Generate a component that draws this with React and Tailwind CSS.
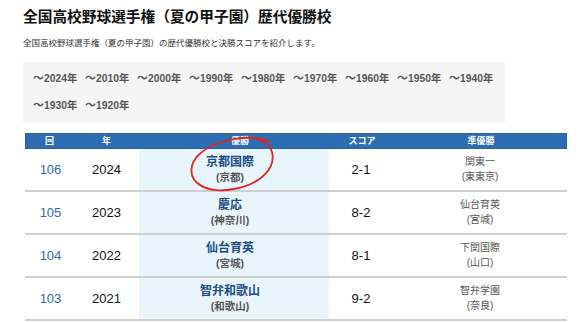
import React from "react";

const years = ["2024", "2010", "2000", "1990", "1980", "1970", "1960", "1950", "1940", "1930", "1920"];

const rows = [
  { n: "106", y: "2024", w: "京都国際", wp: "(京都)", s: "2-1", r: "関東一", rp: "(東東京)" },
  { n: "105", y: "2023", w: "慶応", wp: "(神奈川)", s: "8-2", r: "仙台育英", rp: "(宮城)" },
  { n: "104", y: "2022", w: "仙台育英", wp: "(宮城)", s: "8-1", r: "下関国際", rp: "(山口)" },
  { n: "103", y: "2021", w: "智弁和歌山", wp: "(和歌山)", s: "9-2", r: "智弁学園", rp: "(奈良)" },
];

const font = { fontFamily: '"Liberation Sans", "Noto Sans CJK JP", sans-serif' };

export default function App() {
  return (
    <div className="w-[586px] h-[323px] overflow-hidden bg-white pl-[23px] pt-[7px]" style={font}>
      <h1 className="text-[14.7px] leading-[20px] font-bold text-[#111]">
        全国高校野球選手権（夏の甲子園）歴代優勝校
      </h1>
      <p className="mt-[10px] text-[8.5px] leading-[12px] text-[#333]">
        全国高校野球選手権（夏の甲子園）の歴代優勝校と決勝スコアを紹介します。
      </p>
      <div className="mt-[13px] w-[482px] h-[61px] bg-[#f5f5f5] pl-[10px] pt-[8px] flex flex-wrap gap-x-[8px] content-start">
        {years.map((y) => (
          <span key={y} className="w-[44px] h-[27px] leading-[16px] text-[10.3px] font-bold text-[#555] whitespace-nowrap">
            <span className="text-[11px]">～</span>{y}年
          </span>
        ))}
      </div>
      <div className="relative mt-[10px] ml-[2px] w-[542px]">
        <div className="grid grid-cols-[47px_67px_190px_64px_174px] h-[16px] bg-[#2f6db3] border border-[#2a62a3] text-white text-[9px] font-bold items-center text-center leading-[14px]">
          <div>回</div>
          <div>年</div>
          <div className="pl-[10px]">優勝</div>
          <div>スコア</div>
          <div>準優勝</div>
        </div>
        {rows.map((r) => (
          <div key={r.n} className="grid grid-cols-[47px_67px_190px_64px_174px] h-[43px] border-b-2 border-[#cfcfcf] items-center text-center">
            <div className="text-[13px] text-[#2b6cb0] pl-[4px]">{r.n}</div>
            <div className="text-[13px] text-[#111] pl-[2px]">{r.y}</div>
            <div className="h-full bg-[#e8f5fc] flex flex-col items-center justify-center">
              <div className="text-[12px] leading-[15px] font-bold text-[#1d4c86] pr-[8px]">{r.w}</div>
              <div className="text-[10.5px] leading-[15px] font-bold text-[#555] pr-[8px]">{r.wp}</div>
            </div>
            <div className="text-[13px] text-[#111]">{r.s}</div>
            <div className="flex flex-col items-center justify-center text-[#555]">
              <div className="text-[10px] leading-[14px]">{r.r}</div>
              <div className="text-[10px] leading-[16px]">{r.rp}</div>
            </div>
          </div>
        ))}
        <svg className="absolute left-0 top-0 pointer-events-none" width="542" height="80" viewBox="0 0 542 80">
          <path
            d="M 244 8 C 214 -1, 172 12, 167 33 C 163 51, 183 61, 209 56 C 236 51, 251 35, 247 19 C 244 9, 233 3, 214 5"
            fill="none"
            stroke="#e0251b"
            strokeWidth="1.8"
            strokeLinecap="round"
          />
        </svg>
      </div>
    </div>
  );
}
